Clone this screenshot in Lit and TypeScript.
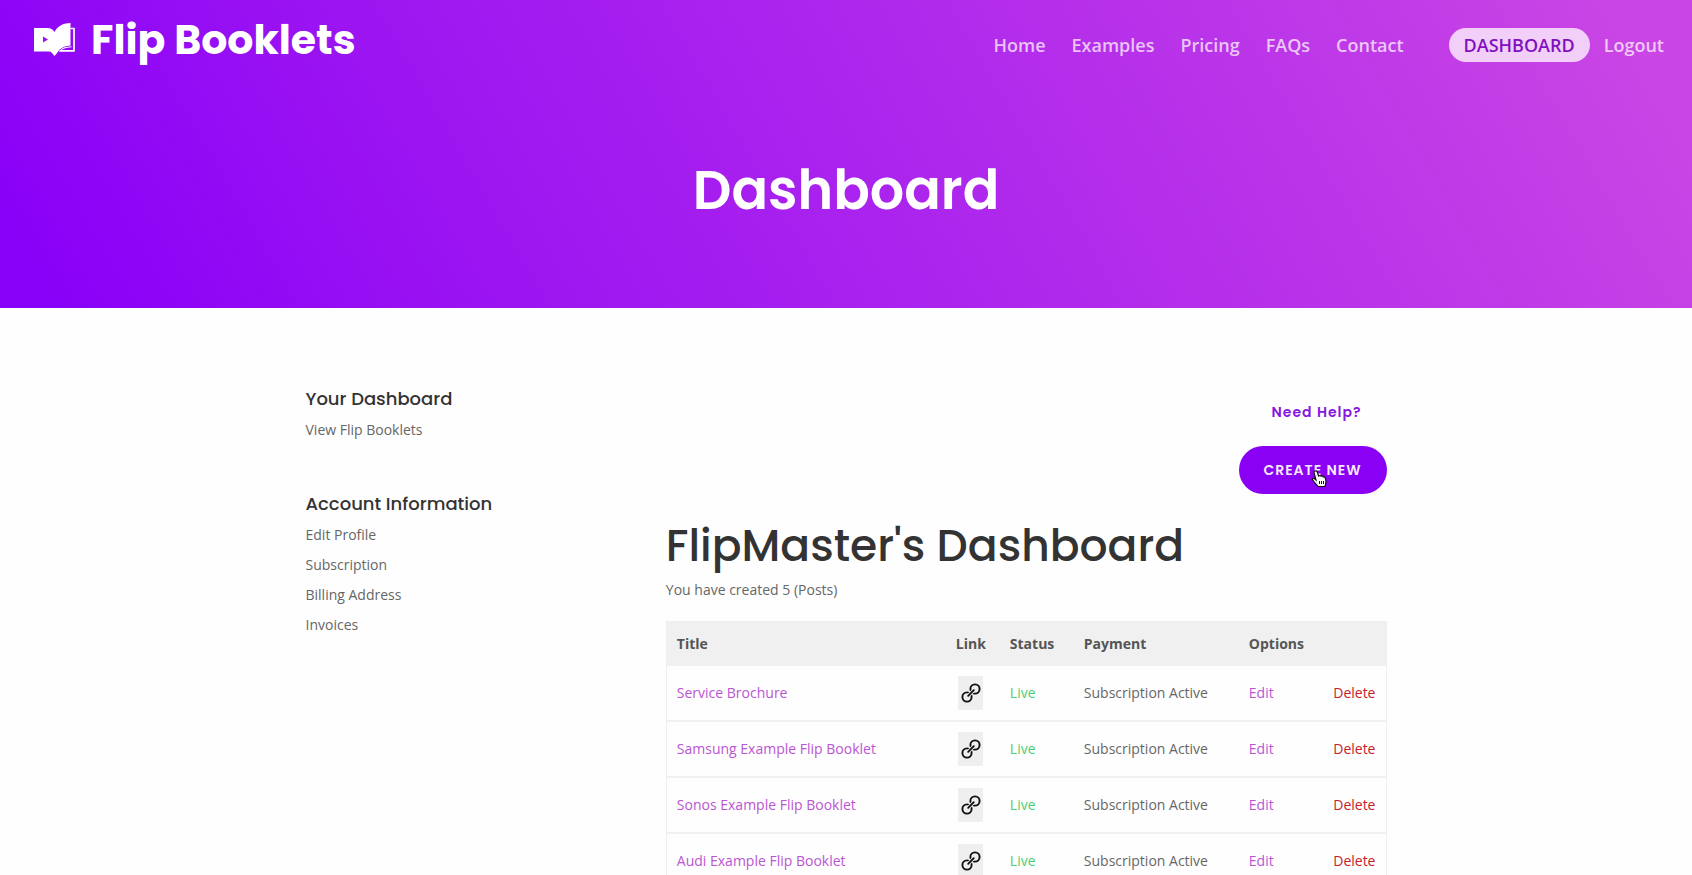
import { LitElement, html, css, svg } from "lit";
import { customElement } from "lit/decorators.js";

const menu = ["Home", "Examples", "Pricing", "FAQs", "Contact"];
const account = ["Edit Profile", "Subscription", "Billing Address", "Invoices"];
const booklets = [
  "Service Brochure",
  "Samsung Example Flip Booklet",
  "Sonos Example Flip Booklet",
  "Audi Example Flip Booklet",
];

const logoIcon = svg`
  <path fill="#fff" d="M0 5.500Q0 5 .5 5H13C16.500 5 19 6.500 20.500 9C23 4 28 0 36.500 0V22.500C32 22.800 26 24.500 23.500 29.500L20.500 33L17.500 29.500Q16.500 28.600 15 28.600H.5Q0 28.600 0 28Z"/>
  <path fill="#9a12ee" d="M9 13.500L14 16.500L9 19.500Z"/>
  <path fill="none" stroke="#fff" stroke-width="1.700" d="M36.500 5.500H40V27.800H25.500"/>
  <path fill="#fff" d="M26 28.500C28.500 25.500 32 24.600 37.500 24.200V23.200C32 23.600 27.500 24.600 25 28.500Z"/>`;

const chainIcon = svg`
  <g fill="none" stroke="#111" stroke-width="1.900" stroke-linecap="round">
    <circle cx="14" cy="6" r="4.600"/>
    <circle cx="6" cy="14" r="4.600"/>
    <path stroke="#efefef" stroke-width="3.600" stroke-linecap="butt" d="M8 12L12 8"/>
    <path d="M7.200 12.800L12.800 7.200"/>
  </g>`;

@customElement("app-root")
export class AppRoot extends LitElement {
  static styles = css`
    :host {
      display: block;
      min-height: 100vh;
      background: #fefefe;
      color: #666;
      font: 14px/24px "Open Sans", "Noto Sans", sans-serif;
    }
    * { box-sizing: border-box; }
    a { color: inherit; text-decoration: none; }
    h1, h2, h3, p, ul { margin: 0; padding: 0; }
    ul { list-style: none; }
    h1, h2, h3, .brand, .help, .create { font-family: Poppins, Inter, sans-serif; }
    .hero {
      height: 308px;
      background: linear-gradient(60deg, #8900f8 3%, #9c15f1 28%, #a922ee 48%, #ca46e4 97%);
      color: #fff;
    }
    .bar {
      display: flex;
      justify-content: space-between;
      align-items: center;
      height: 90px;
      padding: 0 28px 0 34px;
    }
    .brand {
      display: flex;
      align-items: center;
      gap: 15px;
      padding-bottom: 10px;
      font-size: 41px;
      line-height: 60px;
      font-weight: 700;
    }
    .menu {
      display: flex;
      align-items: center;
      gap: 26px;
      font-size: 18px;
      font-weight: 600;
      color: rgba(255, 255, 255, 0.72);
    }
    .session { display: flex; align-items: center; gap: 14px; padding-left: 19px; }
    .pill {
      padding: 5px 15px;
      border-radius: 17px;
      background: #f1cff8;
      color: #820fc0;
    }
    .hero h1 {
      padding-top: 60px;
      text-align: center;
      font-size: 54px;
      line-height: 80px;
      font-weight: 600;
    }
    .content {
      display: grid;
      grid-template-columns: 1fr 2fr;
      width: 1081px;
      max-width: 100%;
      margin: 0 auto;
      padding-top: 78px;
    }
    aside h3 { font-size: 18px; line-height: 26px; font-weight: 500; color: #333; }
    aside ul { padding-top: 3px; margin-bottom: 46px; }
    aside li { line-height: 30px; }
    .actions { display: flex; flex-direction: column; align-items: flex-end; gap: 22px; padding-top: 14px; }
    .help, .create { font-size: 14px; font-weight: 600; letter-spacing: 1px; }
    .help { padding-right: 25px; color: #8617dd; }
    .create {
      position: relative;
      width: 148px;
      height: 48px;
      padding: 0;
      border: 0;
      border-radius: 24px;
      background: #8900f5;
      color: #f5e8ff;
      cursor: pointer;
    }
    .pointer { position: absolute; left: 72px; top: 24px; }
    main h2 { padding: 22px 0 2px; font-size: 44px; line-height: 60px; font-weight: 500; color: #333; }
    main p { margin-bottom: 19px; }
    table {
      width: 100%;
      table-layout: fixed;
      border-collapse: separate;
      border-spacing: 0;
      border: 1px solid #efefef;
    }
    th { height: 44px; padding: 0 10px; background: #f0f0f0; color: #555; font-weight: 700; text-align: left; }
    td { height: 56px; padding: 0 10px; border-bottom: 2px solid #f0f0f0; }
    .title, .edit { color: #ba55d3; }
    .live { color: #4fcf70; }
    .delete { color: #c61c2c; }
    .right { text-align: right; padding-left: 0; }
    .c-title { width: 279px; }
    .c-link { width: 54px; }
    .c-status { width: 74px; }
    .c-payment { width: 165px; }
    .c-edit { width: 76px; }
    .center { text-align: center; padding: 0 4px 0 0; }
    .chain {
      display: inline-flex;
      align-items: center;
      justify-content: center;
      width: 25px;
      height: 34px;
      background: #efefef;
      vertical-align: middle;
    }
  `;

  render() {
    return html`
      <header class="hero">
        <div class="bar">
          <a class="brand" href="#">
            <svg width="42" height="34" viewBox="0 0 42 34" aria-hidden="true">${logoIcon}</svg>
            <span>Flip Booklets</span>
          </a>
          <nav class="menu">
            ${menu.map((item) => html`<a href="#">${item}</a>`)}
            <div class="session">
              <a class="pill" href="#">DASHBOARD</a>
              <a href="#">Logout</a>
            </div>
          </nav>
        </div>
        <h1>Dashboard</h1>
      </header>
      <div class="content">
        <aside>
          <h3>Your Dashboard</h3>
          <ul><li><a href="#">View Flip Booklets</a></li></ul>
          <h3>Account Information</h3>
          <ul>${account.map((item) => html`<li><a href="#">${item}</a></li>`)}</ul>
        </aside>
        <main>
          <div class="actions">
            <a class="help" href="#">Need Help?</a>
            <button class="create">CREATE NEW
              <svg class="pointer" width="17" height="18" viewBox="0 0 17 18" aria-hidden="true">
                <path fill="#fff" stroke="#111" stroke-width="1.200" d="M4 1Q6 .5 6.500 2.500L7.500 6Q9 5 10 6.200Q11.500 5.500 12.300 6.900Q14 6.500 14.500 8.500L15 12L14 16.500H7L3.500 12.500L1.500 9.500Q1.500 8 3 8.300L5 10L3 2.500Q3 1.300 4 1Z"/>
                <path fill="none" stroke="#111" d="M8.500 11V14M10.500 11V14M12.500 11V14"/>
              </svg>
            </button>
          </div>
          <h2>FlipMaster's Dashboard</h2>
          <p>You have created 5 (Posts)</p>
          <table>
            <colgroup>
              <col class="c-title" /><col class="c-link" /><col class="c-status" />
              <col class="c-payment" /><col class="c-edit" /><col />
            </colgroup>
            <thead>
              <tr>
                <th>Title</th><th class="center">Link</th><th>Status</th>
                <th>Payment</th><th colspan="2">Options</th>
              </tr>
            </thead>
            <tbody>
              ${booklets.map((name) => html`
                <tr>
                  <td><a class="title" href="#">${name}</a></td>
                  <td class="center">
                    <a class="chain" href="#" aria-label="Open link">
                      <svg width="20" height="20" viewBox="0 0 20 20">${chainIcon}</svg>
                    </a>
                  </td>
                  <td class="live">Live</td>
                  <td>Subscription Active</td>
                  <td><a class="edit" href="#">Edit</a></td>
                  <td class="right"><a class="delete" href="#">Delete</a></td>
                </tr>`)}
            </tbody>
          </table>
        </main>
      </div>
    `;
  }
}
